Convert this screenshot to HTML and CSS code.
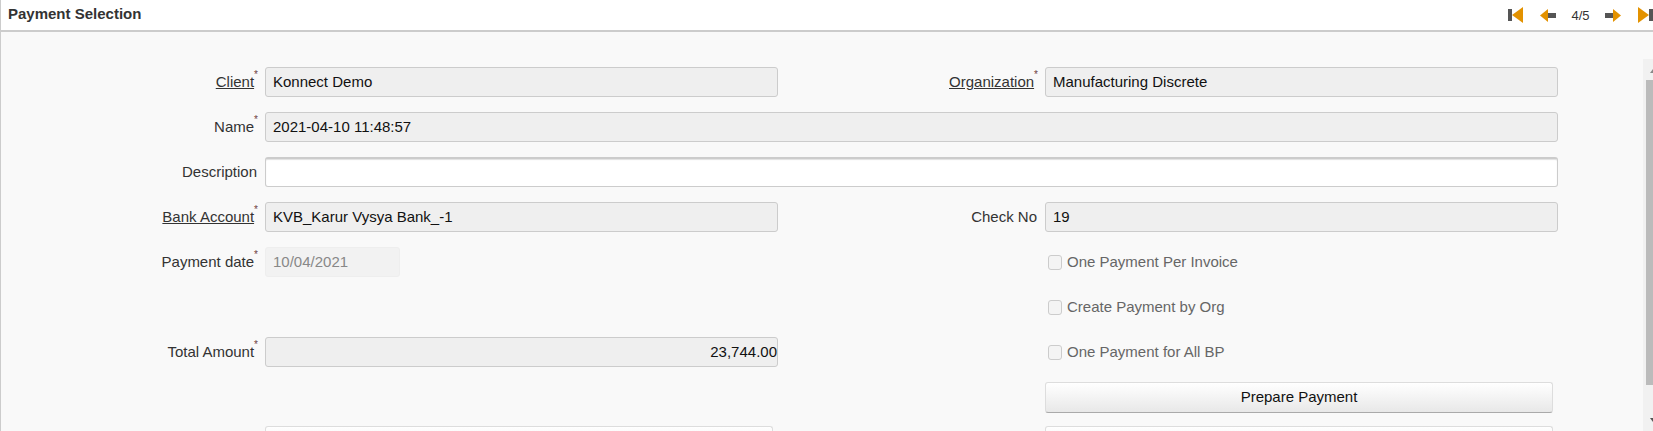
FILE: index.html
```html
<!DOCTYPE html>
<html lang="en">
<head>
<meta charset="utf-8">
<title>Payment Selection</title>
<link rel="stylesheet" href="styles.css">
</head>
<body>
<div class="window">
  <header class="title-bar">
    <h1 class="title">Payment Selection</h1>
    <nav class="pager">
      <svg class="nav-icon nudge" viewBox="0 0 16 16"><rect x="0" y="2" width="4" height="12" fill="#555"/><path d="M15 0V16L4 8Z" fill="#e39200"/></svg>
      <svg class="nav-icon" viewBox="0 0 16 16"><rect x="7" y="6" width="9" height="5" fill="#555"/><path d="M8 2V15L0 8.500Z" fill="#e39200"/></svg>
      <span class="page-count">4/5</span>
      <svg class="nav-icon nudge" viewBox="0 0 16 16"><rect x="0" y="6" width="9" height="5" fill="#555"/><path d="M8 2V15L16 8.500Z" fill="#e39200"/></svg>
      <svg class="nav-icon" viewBox="0 0 16 16"><path d="M1 0V16L12 8Z" fill="#e39200"/><rect x="12" y="2" width="4" height="12" fill="#555"/></svg>
    </nav>
  </header>
  <div class="content">
    <main class="form">
      <label class="label"><span class="link">Client</span><sup class="req">*</sup></label>
      <div class="field readonly">Konnect Demo</div>
      <label class="label"><span class="link">Organization</span><sup class="req">*</sup></label>
      <div class="field readonly">Manufacturing Discrete</div>

      <label class="label">Name<sup class="req">*</sup></label>
      <div class="field readonly span-3">2021-04-10 11:48:57</div>

      <label class="label">Description</label>
      <div class="field editable span-3"></div>

      <label class="label"><span class="link">Bank Account</span><sup class="req">*</sup></label>
      <div class="field readonly">KVB_Karur Vysya Bank_-1</div>
      <label class="label">Check No</label>
      <div class="field readonly">19</div>

      <label class="label">Payment date<sup class="req">*</sup></label>
      <div class="field date">10/04/2021</div>
      <div class="label"></div>
      <label class="check"><span class="box"></span>One Payment Per Invoice</label>

      <div class="label"></div>
      <div></div>
      <div class="label"></div>
      <label class="check"><span class="box"></span>Create Payment by Org</label>

      <label class="label">Total Amount<sup class="req">*</sup></label>
      <div class="field readonly amount">23,744.00</div>
      <div class="label"></div>
      <label class="check"><span class="box"></span>One Payment for All BP</label>

      <div class="label"></div>
      <div></div>
      <div class="label"></div>
      <button class="button" type="button">Prepare Payment</button>

      <div class="label"></div>
      <div class="button cut-off"></div>
      <div class="label"></div>
      <div class="button cut-off"></div>
    </main>
    <aside class="scrollbar">
      <span class="arrow up"></span>
      <span class="thumb"></span>
      <span class="arrow down"></span>
    </aside>
  </div>
</div>
</body>
</html>
```

FILE: styles.css
```css
* { box-sizing: border-box; }
html, body { margin: 0; height: 100%; overflow: hidden; }
body {
  font-family: "Liberation Sans", Arial, sans-serif;
  font-size: 15px;
  color: #333;
  background: #fff;
}
.window { display: flex; flex-direction: column; height: 431px; }
.title-bar {
  height: 32px;
  flex: none;
  display: flex;
  justify-content: space-between;
  align-items: flex-start;
  background: #fff;
  border-bottom: 2px solid #ccc;
  border-left: 1px solid #ccc;
}
.title {
  margin: 6px 0 0 7px;
  font-size: 15px;
  line-height: 16px;
  font-weight: bold;
}
.pager { display: flex; align-items: center; gap: 15px; margin-top: 7px; height: 16px; }
.nav-icon { width: 16px; height: 16px; display: block; }
.nudge { margin-right: 1px; }
.page-count { font-size: 13px; width: 19px; text-align: center; }
.content { flex: 1; min-height: 0; display: flex; background: #f9f9f9; border-left: 1px solid #ccc; }
.form {
  flex: 1;
  min-width: 0;
  height: 399px;
  overflow: hidden;
  display: grid;
  grid-template-columns: 256px 513px 251px 513px;
  grid-auto-rows: 30px;
  column-gap: 8px;
  row-gap: 15px;
  padding-top: 35px;
  align-content: start;
}
.label { text-align: right; line-height: 30px; white-space: nowrap; color: #333; }
.link { text-decoration: underline; }
.req { font-size: 10px; color: #6d4040; line-height: 0; vertical-align: 9px; margin-right: -1px; }
.field {
  height: 30px;
  padding: 0 7px;
  line-height: 28px;
  border: 1px solid #ccc;
  border-radius: 3px;
  color: #111;
}
.readonly { background: #efefef; }
.editable { background: #fff; box-shadow: inset 0 1px 1px rgba(0,0,0,.12); border-top-width: 2px; }
.span-3 { grid-column: span 3; }
.date { width: 135px; background: #f2f2f2; border-color: #eee; color: #888; }
.amount { text-align: right; padding: 0; }
.check { display: flex; align-items: center; color: #666; margin-left: 3px; line-height: 30px; }
.box {
  width: 14px;
  height: 15px;
  margin-right: 5px;
  border: 1px solid #ccc;
  border-radius: 3px;
  background: #f4f4f4;
}
.button {
  display: block;
  width: 508px;
  height: 31px;
  border: 1px solid #ddd;
  border-bottom-color: #aaa;
  border-radius: 3px;
  background: linear-gradient(#fff, #e8e8e8);
  font-family: inherit;
  font-size: 15px;
  color: #111;
  padding: 0 0 2px;
}
.cut-off { margin-top: -1px; }
.scrollbar {
  flex: none;
  width: 10px;
  height: 372px;
  margin-top: 27px;
  background: #f1f1f1;
  display: flex;
  flex-direction: column;
  align-items: flex-end;
}
.thumb { width: 7px; height: 305px; margin-top: 7px; background: #bbb; }
.arrow { width: 0; height: 0; border-left: 3px solid transparent; border-right: 3px solid transparent; margin-right: -3px; }
.arrow.up { border-bottom: 4px solid #888; margin-top: 10px; }
.arrow.down { border-top: 4px solid #555; margin-top: 33px; }
```
